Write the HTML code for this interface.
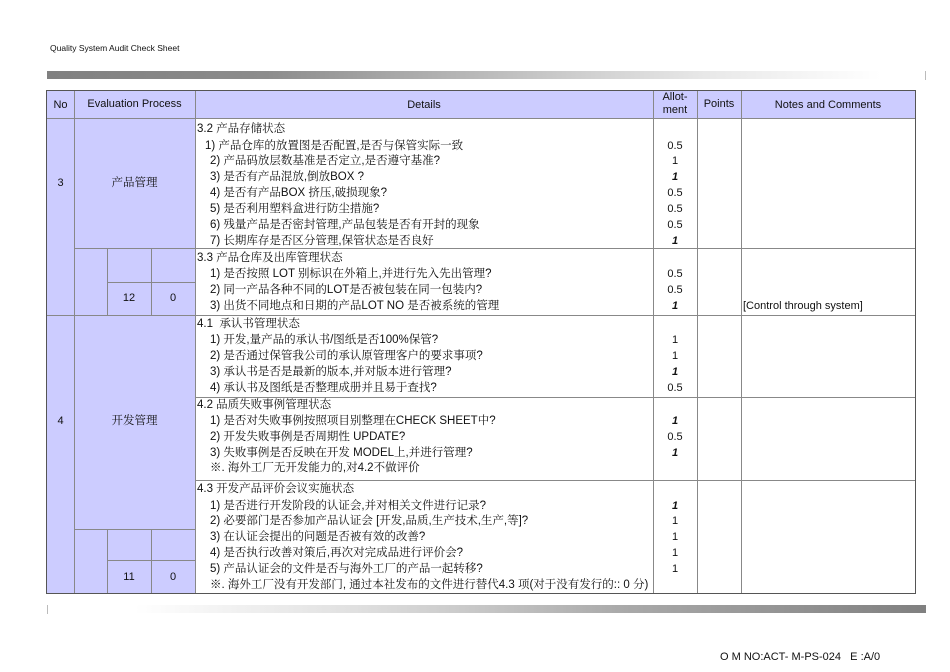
<!DOCTYPE html>
<html><head><meta charset="utf-8"><style>
body{margin:0;width:950px;height:672px;background:#fff;position:relative;overflow:hidden;font-family:"Liberation Sans","Noto Serif CJK SC",serif;color:#111}
.a{position:absolute}
.t{position:absolute;font-size:11px;line-height:14px;white-space:nowrap}
.d{font-size:11.5px}
.s{font-family:"Liberation Sans","Noto Sans CJK SC",sans-serif}
.c{text-align:center}
.h{position:absolute;background:#888;height:1px}
.v{position:absolute;background:#888;width:1px}
.lav{position:absolute;background:#ccccff}
</style></head><body>
<div class="t s" style="left:50px;top:41px;font-size:8.5px">Quality System Audit Check Sheet</div>
<div class="a" style="left:47px;top:71px;width:878px;height:8px;background:linear-gradient(90deg,#808080 0%,#8c8c8c 25%,#bbb 50%,#e8e8e8 75%,#fff 95%)"></div>
<div class="a" style="left:925px;top:71px;width:1px;height:9px;background:#bbb"></div>
<div class="a" style="left:47px;top:605px;width:879px;height:8px;background:linear-gradient(90deg,#fff 0%,#fff 10%,#e0e0e0 35%,#aaa 65%,#808080 100%)"></div>
<div class="a" style="left:47px;top:605px;width:1px;height:9px;background:#bbb"></div>

<div class="lav" style="left:47px;top:91px;width:868px;height:27px"></div>
<div class="lav" style="left:47px;top:118px;width:148px;height:475px"></div>

<div class="a" style="left:46px;top:90px;width:868px;height:502px;border:1px solid #555"></div>
<div class="h" style="left:47px;top:118px;width:868px"></div>
<div class="h" style="left:74px;top:248px;width:841px"></div>
<div class="h" style="left:47px;top:315px;width:868px"></div>
<div class="h" style="left:195px;top:397px;width:720px"></div>
<div class="h" style="left:195px;top:480px;width:720px"></div>
<div class="h" style="left:107px;top:282px;width:88px"></div>
<div class="h" style="left:74px;top:529px;width:121px"></div>
<div class="h" style="left:107px;top:560px;width:88px"></div>
<div class="v" style="left:74px;top:91px;height:502px"></div>
<div class="v" style="left:195px;top:91px;height:502px"></div>
<div class="v" style="left:653px;top:91px;height:502px"></div>
<div class="v" style="left:697px;top:91px;height:502px"></div>
<div class="v" style="left:741px;top:91px;height:502px"></div>
<div class="v" style="left:107px;top:248px;height:67px"></div>
<div class="v" style="left:151px;top:248px;height:67px"></div>
<div class="v" style="left:107px;top:529px;height:64px"></div>
<div class="v" style="left:151px;top:529px;height:64px"></div>

<div class="t c" style="left:47px;width:27px;top:98px">No</div>
<div class="t c" style="left:74px;width:121px;top:97px">Evaluation Process</div>
<div class="t c" style="left:195px;width:458px;top:98px">Details</div>
<div class="t c" style="left:653px;width:44px;top:91px;line-height:13px">Allot-<br>ment</div>
<div class="t c" style="left:697px;width:44px;top:97px">Points</div>
<div class="t c" style="left:741px;width:174px;top:98px">Notes and Comments</div>

<div class="t c" style="left:47px;width:27px;top:176px">3</div>
<div class="t c d" style="left:74px;width:121px;top:176px">产品管理</div>
<div class="t c" style="left:107px;width:44px;top:291px">12</div>
<div class="t c" style="left:151px;width:44px;top:291px">0</div>
<div class="t c" style="left:47px;width:27px;top:414px">4</div>
<div class="t c d" style="left:74px;width:121px;top:414px">开发管理</div>
<div class="t c" style="left:107px;width:44px;top:570px">11</div>
<div class="t c" style="left:151px;width:44px;top:570px">0</div>

<div class="t d" style="left:197px;top:122px">3.2 产品存储状态</div>
<div class="t d" style="left:205px;top:139px">1) 产品仓库的放置图是否配置,是否与保管实际一致</div>
<div class="t d" style="left:210px;top:154px">2) 产品码放层数基准是否定立,是否遵守基准?</div>
<div class="t d" style="left:210px;top:170px">3) 是否有产品混放,倒放BOX ?</div>
<div class="t d" style="left:210px;top:186px">4) 是否有产品BOX 挤压,破损现象?</div>
<div class="t d" style="left:210px;top:202px">5) 是否利用塑料盒进行防尘措施?</div>
<div class="t d" style="left:210px;top:218px">6) 残量产品是否密封管理,产品包装是否有开封的现象</div>
<div class="t d" style="left:210px;top:234px">7) 长期库存是否区分管理,保管状态是否良好</div>

<div class="t d" style="left:197px;top:251px">3.3 产品仓库及出库管理状态</div>
<div class="t d" style="left:210px;top:267px">1) 是否按照 LOT 别标识在外箱上,并进行先入先出管理?</div>
<div class="t d" style="left:210px;top:283px">2) 同一产品各种不同的LOT是否被包装在同一包装内?</div>
<div class="t d" style="left:210px;top:299px">3) 出货不同地点和日期的产品LOT NO 是否被系统的管理</div>

<div class="t d" style="left:197px;top:317px">4.1&nbsp; 承认书管理状态</div>
<div class="t d" style="left:210px;top:333px">1) 开发,量产品的承认书/图纸是否100%保管?</div>
<div class="t d" style="left:210px;top:349px">2) 是否通过保管我公司的承认原管理客户的要求事项?</div>
<div class="t d" style="left:210px;top:365px">3) 承认书是否是最新的版本,并对版本进行管理?</div>
<div class="t d" style="left:210px;top:381px">4) 承认书及图纸是否整理成册并且易于查找?</div>

<div class="t d" style="left:197px;top:398px">4.2 品质失败事例管理状态</div>
<div class="t d" style="left:210px;top:414px">1) 是否对失败事例按照项目别整理在CHECK SHEET中?</div>
<div class="t d" style="left:210px;top:430px">2) 开发失败事例是否周期性 UPDATE?</div>
<div class="t d" style="left:210px;top:446px">3) 失败事例是否反映在开发 MODEL上,并进行管理?</div>
<div class="t d" style="left:210px;top:461px">※. 海外工厂无开发能力的,对4.2不做评价</div>

<div class="t d" style="left:197px;top:482px">4.3 开发产品评价会议实施状态</div>
<div class="t d" style="left:210px;top:499px">1) 是否进行开发阶段的认证会,并对相关文件进行记录?</div>
<div class="t d" style="left:210px;top:514px">2) 必要部门是否参加产品认证会 [开发,品质,生产技术,生产,等]?</div>
<div class="t d" style="left:210px;top:530px">3) 在认证会提出的问题是否被有效的改善?</div>
<div class="t d" style="left:210px;top:546px">4) 是否执行改善对策后,再次对完成品进行评价会?</div>
<div class="t d" style="left:210px;top:562px">5) 产品认证会的文件是否与海外工厂的产品一起转移?</div>
<div class="t d" style="left:210px;top:578px">※. 海外工厂没有开发部门, 通过本社发布的文件进行替代4.3 项(对于没有发行的:: 0 分)</div>

<div class="t c" style="left:653px;width:44px;top:139px">0.5</div>
<div class="t c" style="left:653px;width:44px;top:154px">1</div>
<div class="t c" style="left:653px;width:44px;top:170px"><i><b>1</b></i></div>
<div class="t c" style="left:653px;width:44px;top:186px">0.5</div>
<div class="t c" style="left:653px;width:44px;top:202px">0.5</div>
<div class="t c" style="left:653px;width:44px;top:218px">0.5</div>
<div class="t c" style="left:653px;width:44px;top:234px"><i><b>1</b></i></div>
<div class="t c" style="left:653px;width:44px;top:267px">0.5</div>
<div class="t c" style="left:653px;width:44px;top:283px">0.5</div>
<div class="t c" style="left:653px;width:44px;top:299px"><i><b>1</b></i></div>
<div class="t" style="left:743px;top:299px">[Control through system]</div>
<div class="t c" style="left:653px;width:44px;top:333px">1</div>
<div class="t c" style="left:653px;width:44px;top:349px">1</div>
<div class="t c" style="left:653px;width:44px;top:365px"><i><b>1</b></i></div>
<div class="t c" style="left:653px;width:44px;top:381px">0.5</div>
<div class="t c" style="left:653px;width:44px;top:414px"><i><b>1</b></i></div>
<div class="t c" style="left:653px;width:44px;top:430px">0.5</div>
<div class="t c" style="left:653px;width:44px;top:446px"><i><b>1</b></i></div>
<div class="t c" style="left:653px;width:44px;top:499px"><i><b>1</b></i></div>
<div class="t c" style="left:653px;width:44px;top:514px">1</div>
<div class="t c" style="left:653px;width:44px;top:530px">1</div>
<div class="t c" style="left:653px;width:44px;top:546px">1</div>
<div class="t c" style="left:653px;width:44px;top:562px">1</div>

<div class="t" style="left:720px;top:650px;font-size:11px">O M NO:ACT- M-PS-024&nbsp;&nbsp; E :A/0</div>
</body></html>
